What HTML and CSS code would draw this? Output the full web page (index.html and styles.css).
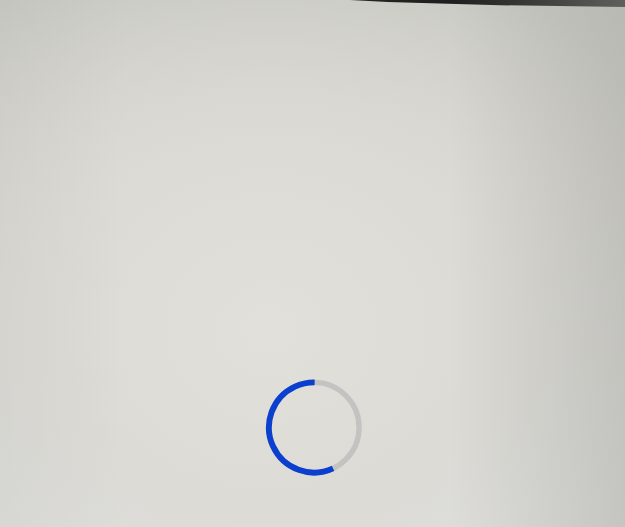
FILE: index.html
```html
<!DOCTYPE html>
<html lang="en">
<head>
<meta charset="utf-8">
<title>Loading</title>
<link rel="stylesheet" href="styles.css">
</head>
<body>
<div class="screen">
  <div class="bezel"></div>
  <main class="stage">
    <div class="spinner" role="progressbar" aria-label="Loading">
      <svg viewBox="0 0 100 100" width="98" height="101">
        <circle class="track" cx="50" cy="50" r="46"></circle>
        <circle class="arc" cx="50" cy="50" r="46" transform="rotate(65 50 50)"></circle>
      </svg>
    </div>
  </main>
</div>
</body>
</html>
```
FILE: styles.css
```css
html, body {
  margin: 0;
  padding: 0;
  height: 100%;
}
body {
  font-family: "Liberation Sans", Arial, sans-serif;
  overflow: hidden;
}
.screen {
  width: 625px;
  height: 527px;
  display: flex;
  flex-direction: column;
  background:
    radial-gradient(ellipse 460px 400px at 270px 330px, #e1e0db 0%, #dcdbd6 45%, rgba(219,218,213,0) 100%),
    linear-gradient(180deg, #c8c8c3 0%, #d3d2cd 30%, #dcdcd8 60%, #e0e1df 100%);
  background-color: #d6d5d0;
  position: relative;
}
.screen::after {
  content: "";
  position: absolute;
  inset: 0;
  pointer-events: none;
  background: linear-gradient(90deg, rgba(185,185,180,0.2) 0%, rgba(185,185,180,0) 20%, rgba(180,180,175,0) 72%, rgba(170,170,165,0.5) 100%);
}
.bezel {
  height: 7px;
  flex: none;
  background: linear-gradient(90deg, #3a3a38 0%, #141414 100%);
  clip-path: polygon(56% 0, 100% 0, 100% 100%, 80% 75%, 62% 30%);
}
.stage {
  flex: 1;
  display: flex;
  justify-content: center;
  padding-top: 370px;
  padding-left: 2px;
}
.spinner {
  width: 98px;
  height: 101px;
  position: relative;
  z-index: 1;
}
.spinner svg {
  display: block;
}
.track {
  fill: none;
  stroke: #c3c3c1;
  stroke-width: 5.5;
}
.arc {
  fill: none;
  stroke: #0b3fcf;
  stroke-width: 6;
  stroke-dasharray: 165 300;
}
```
